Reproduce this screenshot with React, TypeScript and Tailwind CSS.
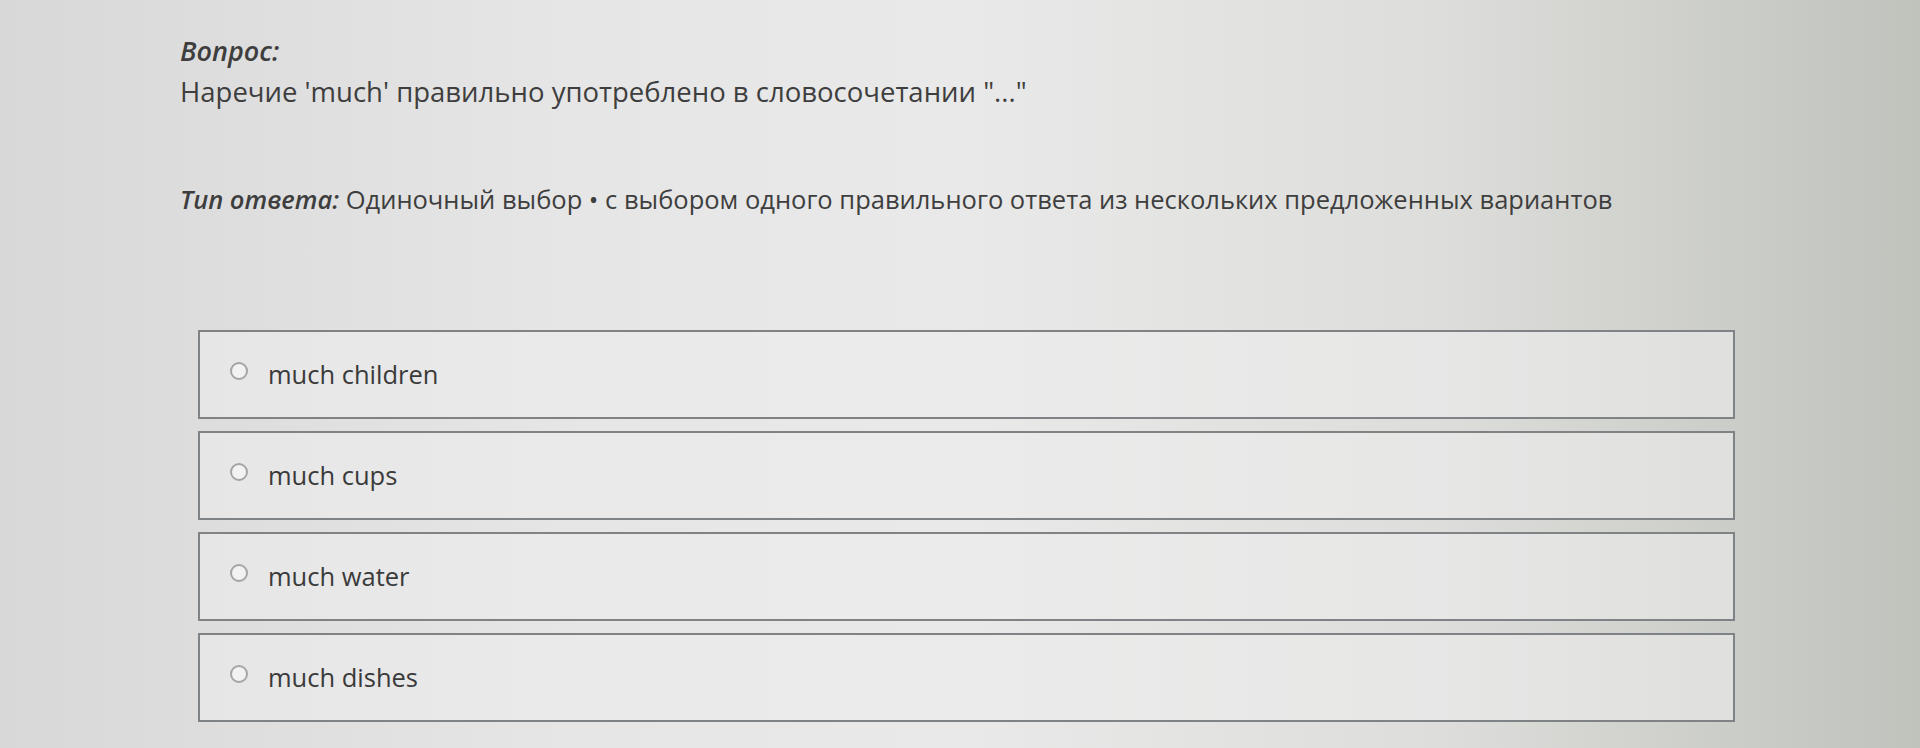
import React from "react";

const options = ["much children", "much cups", "much water", "much dishes"];

export default function App() {
  return (
    <div
      className="w-[1920px] h-[748px] overflow-hidden bg-[linear-gradient(90deg,#d8d8d8_0%,#e6e6e6_30%,#e9e9e9_50%,#dddedb_75%,#c0c2bc_100%)] text-[#3e3e3e]"
      style={{ fontFamily: '"Open Sans", "Noto Sans", sans-serif' }}
    >
      <div className="pl-[180px] pt-[36px]">
        <div className="text-[27px] leading-[30px] italic font-semibold">Вопрос:</div>
        <div className="mt-[10px] text-[27.5px] leading-[32px]">
          Наречие 'much' правильно употреблено в словосочетании "..."
        </div>
        <div className="mt-[75px] text-[25.5px] leading-[32px]">
          <span className="italic font-semibold">Тип ответа:</span> Одиночный выбор • с выбором одного правильного ответа из нескольких предложенных вариантов
        </div>
      </div>
      <div className="ml-[198px] mt-[115px] w-[1537px] flex flex-col gap-[12px]">
        {options.map((o) => (
          <div
            key={o}
            className="h-[89px] border-2 border-[#808386] bg-[#ececec]/60 flex items-center pl-[30px]"
          >
            <span className="shrink-0 w-[18px] h-[18px] rounded-full border-2 border-[#a3a5a7] bg-[#f2f2f2] mt-[-8px]" />
            <span className="ml-[20px] text-[25.5px] text-[#3a3a3a]">{o}</span>
          </div>
        ))}
      </div>
    </div>
  );
}
